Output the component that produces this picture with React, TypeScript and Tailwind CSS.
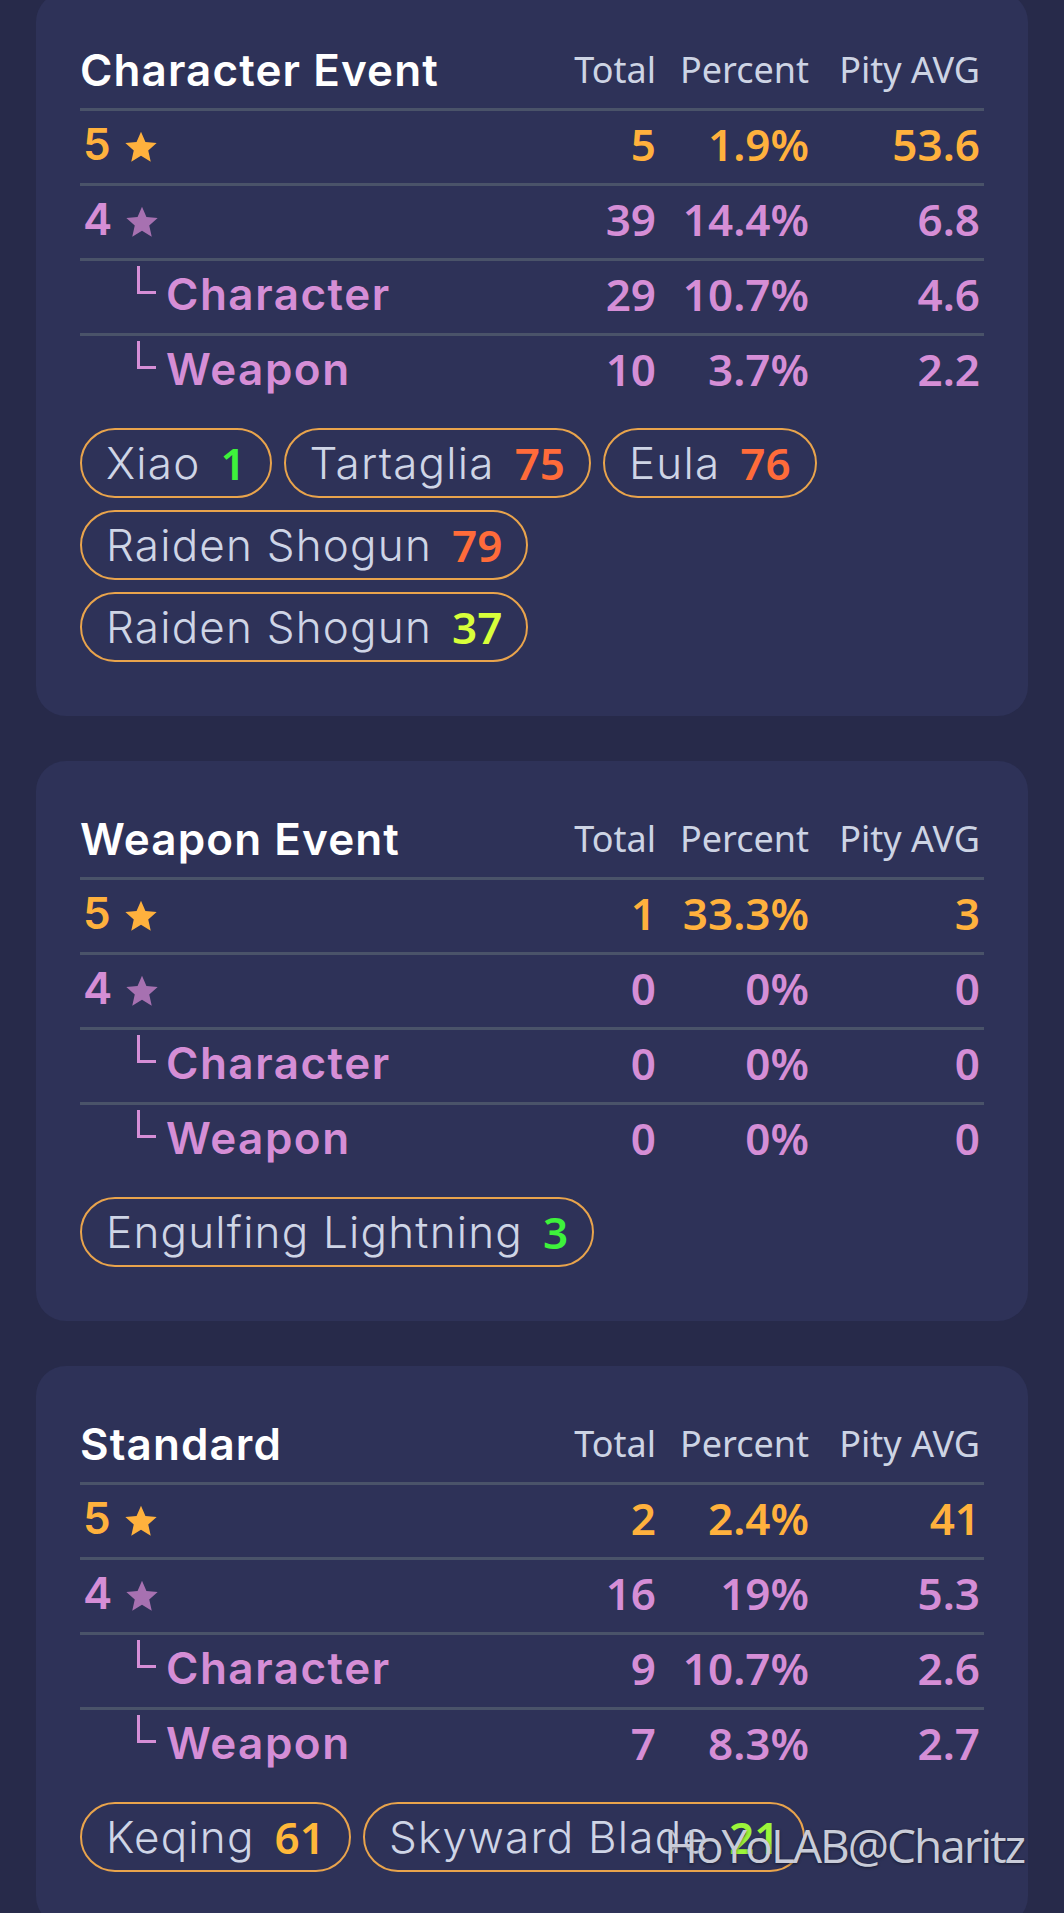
const GOLD = "text-[#ffb13d]";
const PURPLE = "text-[#d58ed6]";

type RowKind = "five" | "four" | "sub";

type StatRow = {
  kind: RowKind;
  label: string;
  total: string;
  percent: string;
  pity: string;
};

type Pull = { name: string; pity: number; color: string };

type Banner = { title: string; rows: StatRow[]; pulls: Pull[] };

const banners: Banner[] = [
  {
    title: "Character Event",
    rows: [
      { kind: "five", label: "5", total: "5", percent: "1.9%", pity: "53.6" },
      { kind: "four", label: "4", total: "39", percent: "14.4%", pity: "6.8" },
      { kind: "sub", label: "Character", total: "29", percent: "10.7%", pity: "4.6" },
      { kind: "sub", label: "Weapon", total: "10", percent: "3.7%", pity: "2.2" },
    ],
    pulls: [
      { name: "Xiao", pity: 1, color: "text-[#3ef23b]" },
      { name: "Tartaglia", pity: 75, color: "text-[#ff6b3a]" },
      { name: "Eula", pity: 76, color: "text-[#ff6b3a]" },
      { name: "Raiden Shogun", pity: 79, color: "text-[#ff6b3a]" },
      { name: "Raiden Shogun", pity: 37, color: "text-[#d8ff3a]" },
    ],
  },
  {
    title: "Weapon Event",
    rows: [
      { kind: "five", label: "5", total: "1", percent: "33.3%", pity: "3" },
      { kind: "four", label: "4", total: "0", percent: "0%", pity: "0" },
      { kind: "sub", label: "Character", total: "0", percent: "0%", pity: "0" },
      { kind: "sub", label: "Weapon", total: "0", percent: "0%", pity: "0" },
    ],
    pulls: [{ name: "Engulfing Lightning", pity: 3, color: "text-[#3ef23b]" }],
  },
  {
    title: "Standard",
    rows: [
      { kind: "five", label: "5", total: "2", percent: "2.4%", pity: "41" },
      { kind: "four", label: "4", total: "16", percent: "19%", pity: "5.3" },
      { kind: "sub", label: "Character", total: "9", percent: "10.7%", pity: "2.6" },
      { kind: "sub", label: "Weapon", total: "7", percent: "8.3%", pity: "2.7" },
    ],
    pulls: [
      { name: "Keqing", pity: 61, color: "text-[#ffb83a]" },
      { name: "Skyward Blade", pity: 21, color: "text-[#9cf53a]" },
    ],
  },
];

const StarIcon = ({ color }: { color: string }) => (
  <svg viewBox="0 0 24 23" className={`mt-[6px] h-[34px] w-[36px] ${color}`}>
    <polygon
      fill="currentColor"
      points="12,1.2 15,8.1 22.6,8.8 16.9,13.9 18.6,21.4 12,17.5 5.4,21.4 7.1,13.9 1.4,8.8 9,8.1"
    />
  </svg>
);

const RowLabel = ({ row }: { row: StatRow }) => {
  if (row.kind === "sub") {
    return (
      <div className="flex items-center gap-[10px] pl-[57px]">
        {/* tree branch mark */}
        <span className="mb-[28px] h-[28px] w-[19px] border-b-[3px] border-l-[3px] border-[#d58ed6]" />
        <span
          className={`font-['Inter',sans-serif] text-[44px] font-semibold tracking-[1.5px] ${PURPLE}`}
        >
          {row.label}
        </span>
      </div>
    );
  }
  const five = row.kind === "five";
  return (
    <div className="flex items-center gap-[12px] pl-[3px]">
      <span
        className={`font-['Inter',sans-serif] text-[44px] font-semibold ${five ? GOLD : PURPLE}`}
      >
        {row.label}
      </span>
      <StarIcon color={five ? "text-[#ffb13d]" : "text-[#a771b1]"} />
    </div>
  );
};

const BannerCard = ({ banner }: { banner: Banner }) => {
  return (
    <section className="rounded-[30px] bg-[#2e3258] px-11 pb-[54px] pt-10">
      {/* header */}
      <div className="grid h-[76px] grid-cols-[1fr_120px_153px_171px] items-center pr-1">
        <h2 className="font-['Inter',sans-serif] text-[44px] font-semibold tracking-[1.1px] text-white">
          {banner.title}
        </h2>
        <span className="text-right font-['Noto_Sans',sans-serif] text-[36px] text-[#cdd4e4]">Total</span>
        <span className="text-right font-['Noto_Sans',sans-serif] text-[36px] text-[#cdd4e4]">Percent</span>
        <span className="text-right font-['Noto_Sans',sans-serif] text-[36px] text-[#cdd4e4]">Pity AVG</span>
      </div>
      <div className="h-[3px] bg-[#4a5369]" />

      {/* stats */}
      <div className="flex flex-col">
        {banner.rows.map((row, i) => {
          const color = row.kind === "five" ? GOLD : PURPLE;
          return (
            <div
              key={i}
              className={`box-content grid h-[66px] grid-cols-[1fr_120px_153px_171px] items-center pb-[6px] pr-1 ${
                i < banner.rows.length - 1 ? "border-b-[3px] border-[#4a5369]" : ""
              }`}
            >
              <RowLabel row={row} />
              <span className={`text-right font-['Noto_Sans',sans-serif] text-[44px] font-semibold ${color}`}>
                {row.total}
              </span>
              <span className={`text-right font-['Noto_Sans',sans-serif] text-[44px] font-semibold ${color}`}>
                {row.percent}
              </span>
              <span className={`text-right font-['Noto_Sans',sans-serif] text-[44px] font-semibold ${color}`}>
                {row.pity}
              </span>
            </div>
          );
        })}
      </div>

      {/* 5 star pulls */}
      <div className="mt-5 flex flex-wrap gap-3">
        {banner.pulls.map((pull, i) => (
          <div
            key={i}
            className="flex h-[70px] items-center gap-[20px] rounded-full border-2 border-[#e9a44c] px-6"
          >
            <span className="font-['Inter',sans-serif] text-[44px] font-light tracking-[1.2px] text-[#cfd5e6]">
              {pull.name}
            </span>
            <span className={`font-['Noto_Sans',sans-serif] text-[44px] font-semibold ${pull.color}`}>
              {pull.pity}
            </span>
          </div>
        ))}
      </div>
    </section>
  );
};

export default function App() {
  return (
    <div className="relative h-[1913px] overflow-hidden bg-[#272a4a] px-[36px]">
      <div className="-mt-2 flex flex-col gap-[45px]">
        {banners.map((b) => (
          <BannerCard key={b.title} banner={b} />
        ))}
      </div>

      {/* watermark */}
      <span className="absolute left-[664px] top-[1822px] font-['Open_Sans',sans-serif] text-[46px] leading-none tracking-[-2px] text-[#c9ccd8] [text-shadow:0_1px_3px_rgba(0,0,0,0.45)]">
        HoYoLAB@Charitz
      </span>
    </div>
  );
}
